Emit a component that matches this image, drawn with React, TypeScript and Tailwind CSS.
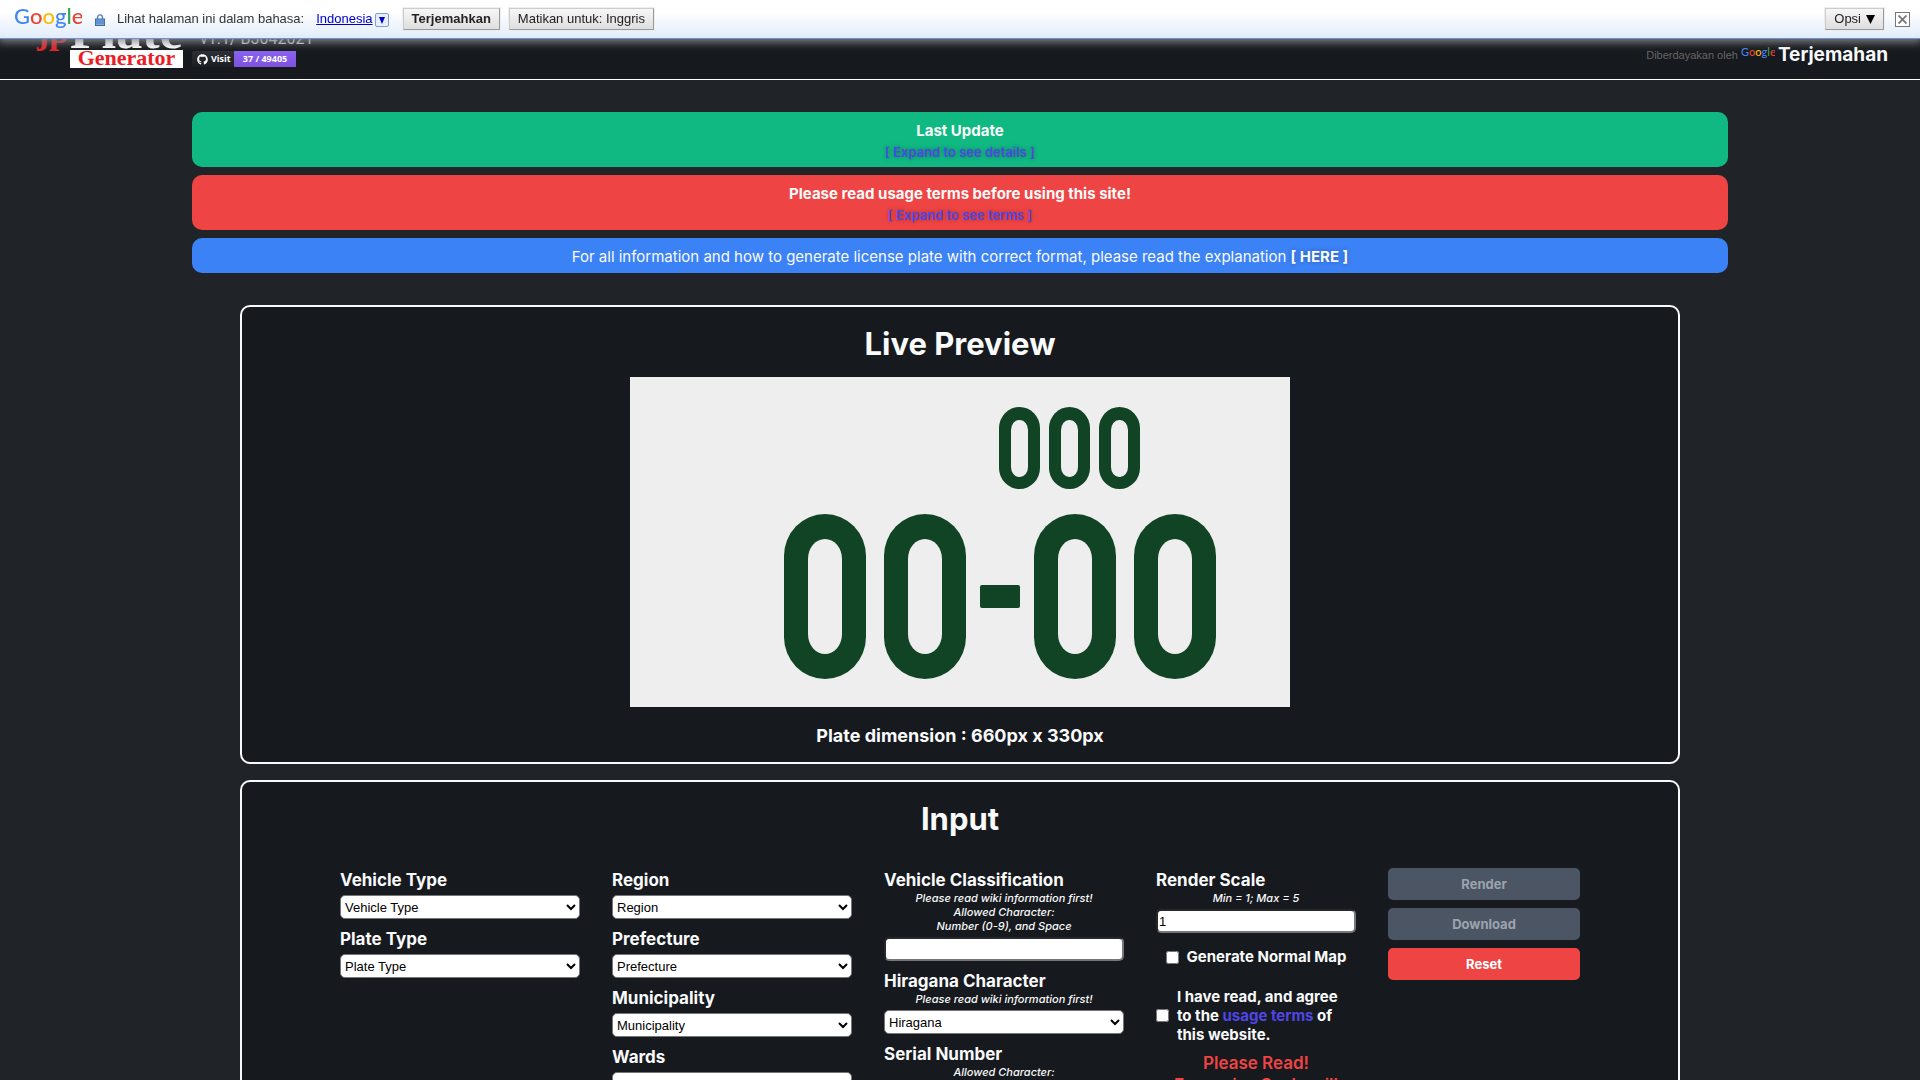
import type { ReactNode } from "react";
import { FaGithub } from "react-icons/fa";

function GoogleWordmark({ className }: { className: string }) {
  return (
    <svg viewBox="0 0 68 24" className={className} role="img" aria-label="Google">
      <text x="0" y="17" fontFamily="Lato, sans-serif" fontSize="22" fontWeight="500" stroke="none">
        <tspan fill="#4285f4">G</tspan>
        <tspan fill="#ea4335">o</tspan>
        <tspan fill="#fbbc05">o</tspan>
        <tspan fill="#4285f4">g</tspan>
        <tspan fill="#34a853">l</tspan>
        <tspan fill="#ea4335">e</tspan>
      </text>
    </svg>
  );
}

const toolbarButton =
  "h-[22px] border border-t-[#ccc] border-l-[#ccc] border-r-[#999] border-b-[#999] bg-linear-to-b from-[#f7f7f7] to-[#dedede] px-2 leading-5 text-[#222] outline outline-[#eee]";

function TranslateToolbar() {
  return (
    <div className="fixed inset-x-0 top-0 z-10 flex h-[39px] items-center border-b border-[#6b90da] bg-linear-to-b from-white from-30% to-[#e1ecfa] pl-[14px] pr-[10px] font-['Liberation_Sans',sans-serif] text-[13px] text-[#333] shadow-[0_1px_9px_2px_#888]">
      <GoogleWordmark className="h-6 w-[68px]" />
      <svg viewBox="0 0 10 12" className="ml-[13px] mt-[1px] h-3 w-[10px]" aria-hidden="true">
        <path d="M2.5 6V3.4a2.5 2.5 0 0 1 5 0V6" fill="none" stroke="#5b83bd" strokeWidth="1.4" />
        <rect x="0.5" y="5" width="9" height="6.5" fill="#7fa8dc" stroke="#3f6eb5" />
        <path d="M1 7h8M1 9h8" stroke="#3f6eb5" strokeWidth="0.8" />
      </svg>
      <span className="ml-3">Lihat halaman ini dalam bahasa:</span>
      <a href="#language" className="ml-3 text-[#0000cc] underline">
        Indonesia
      </a>
      <button
        type="button"
        aria-label="Pilih bahasa"
        className="ml-[2px] mt-[2px] flex size-[14px] items-center justify-center rounded-[2px] border border-[#7b9fd0] bg-[#e6effb]"
      >
        <svg viewBox="0 0 6 7" className="h-[7px] w-[6px]" aria-hidden="true">
          <path d="M0 0h6L3 7z" fill="#0000cc" />
        </svg>
      </button>
      <button type="button" className={`${toolbarButton} ml-[14px] font-bold`}>
        Terjemahkan
      </button>
      <button type="button" className={`${toolbarButton} ml-[9px]`}>
        Matikan untuk: Inggris
      </button>
      <button type="button" className={`${toolbarButton} ml-auto flex items-center gap-[5px]`}>
        Opsi
        <svg viewBox="0 0 9 9" className="size-[9px]" aria-hidden="true">
          <path d="M0 0h9L4.5 9z" fill="#000" />
        </svg>
      </button>
      <button
        type="button"
        aria-label="Tutup"
        className="ml-[11px] flex size-[15px] items-center justify-center border border-[#777] bg-white"
      >
        <svg viewBox="0 0 9 9" className="size-[9px]" aria-hidden="true">
          <path d="M0.5 0.5l8 8M8.5 0.5l-8 8" stroke="#777" strokeWidth="1.8" />
        </svg>
      </button>
    </div>
  );
}

function SiteHeader() {
  return (
    <header className="flex h-20 items-end justify-between border-b border-white bg-[#16191d] pl-9 pr-8">
      <div className="flex items-end gap-2">
        <svg viewBox="0 0 148 60" className="mb-[11px] h-[60px] w-[148px]" role="img" aria-label="jpPlate Generator">
          <g fontFamily="'Liberation Serif', serif" fontWeight="bold">
            <text x="1" y="35" fontSize="36" fill="#e02328">
              jp
            </text>
            <text x="34" y="40" fontSize="52" fill="#fff">
              Plate
            </text>
            <rect x="34" y="42" width="113" height="18" fill="#fff" />
            <text x="90.5" y="57" fontSize="22" fill="#ed1c24" textAnchor="middle">
              Generator
            </text>
          </g>
        </svg>
        <div className="mb-3 flex flex-col gap-1">
          <span className="pl-2 font-[Roboto,sans-serif] text-base leading-4 text-gray-300">v1.1/ B3042021</span>
          <div className="flex h-4 overflow-hidden rounded-[3px] font-['Open_Sans',sans-serif] text-[9px] leading-4 font-bold text-white">
            <span className="flex w-[42px] items-center gap-[3px] bg-linear-to-b from-[#2c2f33] to-[#1c1f22] pl-[5px]">
              <FaGithub className="size-[11px]" aria-hidden="true" />
              Visit
            </span>
            <span className="w-[62px] bg-linear-to-b from-[#8b62f0] to-[#7c52de] text-center">37 / 49405</span>
          </div>
        </div>
      </div>
      <div className="mb-3 flex items-center">
        <span className="mr-[3px] font-['Liberation_Sans',sans-serif] text-[11px] text-[#666]">Diberdayakan oleh</span>
        <GoogleWordmark className="mb-1 mr-[3px] h-3 w-[34px]" />
        <a href="#translate" className="text-[19px] leading-6 font-bold">
          Terjemahan
        </a>
      </div>
    </header>
  );
}

function Notice({ className, children }: { className: string; children: ReactNode }) {
  return (
    <section className={`rounded-[10px] pt-[7px] pb-[5px] text-center text-[15px] leading-[23px] ${className}`}>
      {children}
    </section>
  );
}

function Notices() {
  const expand =
    "mx-auto block text-[13px] leading-5 font-semibold text-[#4f46e5] [text-shadow:0_0_4px_rgba(0,0,0,0.35)]";
  return (
    <div className="mx-auto flex w-4/5 flex-col gap-2">
      <Notice className="bg-[#10b981]">
        <h2 className="font-bold">Last Update</h2>
        <button type="button" className={expand}>
          [ Expand to see details ]
        </button>
      </Notice>
      <Notice className="bg-[#ef4444]">
        <h2 className="font-bold">Please read usage terms before using this site!</h2>
        <button type="button" className={expand}>
          [ Expand to see terms ]
        </button>
      </Notice>
      <Notice className="bg-[#3b82f6]">
        For all information and how to generate license plate with correct format, please read the explanation{" "}
        <a href="#wiki" className="font-bold [text-shadow:0_0_4px_rgba(0,0,0,0.3)]">
          [ HERE ]
        </a>
      </Notice>
    </div>
  );
}

function Card({ title, children }: { title: string; children: ReactNode }) {
  return (
    <section className="mx-auto w-3/4 rounded-[10px] border-2 border-[#f9fafb] bg-[#16191d] pt-4 pb-[14px]">
      <h1 className="text-center text-[31px] leading-[42px] font-bold">{title}</h1>
      {children}
    </section>
  );
}

function PlatePreview() {
  const small = [369, 419, 469];
  const large = [154, 254, 404, 504];
  return (
    <svg viewBox="0 0 660 330" className="mx-auto mt-3 w-full max-w-[660px]" role="img" aria-label="License plate 000 00-00">
      <rect width="660" height="330" fill="#eeeeee" />
      {small.map((x) => (
        <g key={x}>
          <rect x={x} y="30" width="41" height="82" rx="20.5" ry="21" fill="#114425" />
          <rect x={x + 12} y="43" width="17" height="57" rx="8" ry="10" fill="#eeeeee" />
        </g>
      ))}
      {large.map((x) => (
        <g key={x}>
          <rect x={x} y="137" width="82" height="165" rx="41" ry="42" fill="#114425" />
          <rect x={x + 24} y="162" width="34" height="115" rx="17" ry="20" fill="#eeeeee" />
        </g>
      ))}
      <rect x="350" y="208" width="40" height="23" rx="2" fill="#114425" />
    </svg>
  );
}

function Field({ id, label, hints = [], children }: { id: string; label: string; hints?: string[]; children: ReactNode }) {
  return (
    <div className="flex flex-col">
      <label htmlFor={id} className="pt-px text-[17px] leading-[22px] font-bold">
        {label}
      </label>
      {hints.map((hint) => (
        <em key={hint} className="text-center text-[11px] leading-[14px] font-medium">
          {hint}
        </em>
      ))}
      <div className="mt-1 flex">{children}</div>
    </div>
  );
}

function SelectField({ id, label, option, hints }: { id: string; label: string; option: string; hints?: string[] }) {
  return (
    <Field id={id} label={label} hints={hints}>
      <select
        id={id}
        className="h-6 w-full rounded-[5px] border border-[#767676] bg-white font-['Liberation_Sans',sans-serif] text-[13px] text-black"
      >
        <option>{option}</option>
      </select>
    </Field>
  );
}

function TextField({ id, label, value, hints }: { id: string; label: string; value?: string; hints?: string[] }) {
  return (
    <Field id={id} label={label} hints={hints}>
      <input
        id={id}
        type="text"
        defaultValue={value}
        className="h-6 w-full rounded-[5px] border-2 border-t-[#26282b] border-r-[#767676] border-b-[#767676] border-l-[#26282b] bg-white px-[1px] font-['Liberation_Sans',sans-serif] text-[13px] text-black"
      />
    </Field>
  );
}

function InputForm() {
  const wiki = "Please read wiki information first!";
  const action = "h-8 rounded-[5px] pt-px text-[13px] font-bold";
  return (
    <form className="mt-7 flex flex-wrap justify-center gap-8">
      <div className="flex w-60 flex-col gap-2">
        <SelectField id="vehicle-type" label="Vehicle Type" option="Vehicle Type" />
        <SelectField id="plate-type" label="Plate Type" option="Plate Type" />
      </div>
      <div className="flex w-60 flex-col gap-2">
        <SelectField id="region" label="Region" option="Region" />
        <SelectField id="prefecture" label="Prefecture" option="Prefecture" />
        <SelectField id="municipality" label="Municipality" option="Municipality" />
        <SelectField id="wards" label="Wards" option="Wards" />
      </div>
      <div className="flex w-60 flex-col gap-2">
        <TextField
          id="classification"
          label="Vehicle Classification"
          hints={[wiki, "Allowed Character:", "Number (0-9), and Space"]}
        />
        <SelectField id="hiragana" label="Hiragana Character" option="Hiragana" hints={[wiki]} />
        <TextField id="serial" label="Serial Number" hints={["Allowed Character:", "Number (0-9), and Space"]} />
      </div>
      <div className="flex w-[200px] flex-col">
        <TextField id="scale" label="Render Scale" value="1" hints={["Min = 1; Max = 5"]} />
        <div className="mt-3 flex items-center justify-center gap-2">
          <input id="normal-map" type="checkbox" className="size-[13px]" />
          <label htmlFor="normal-map" className="text-[15px] leading-6 font-bold">
            Generate Normal Map
          </label>
        </div>
        <div className="mt-[18px] flex items-center gap-2 pr-2">
          <input id="agree" type="checkbox" className="size-[13px] shrink-0" />
          <label htmlFor="agree" className="text-[15px] leading-[19px] font-bold">
            I have read, and agree to the{" "}
            <a href="#terms" className="text-[#4f46e5]">
              usage terms
            </a>{" "}
            of this website.
          </label>
        </div>
        <p className="mt-2 text-center text-[17px] leading-[22px] font-semibold whitespace-nowrap text-[#ef4444]">
          Please Read!
          <br />
          Excessive Scale will
        </p>
      </div>
      <div className="flex w-48 flex-col gap-2">
        <button type="button" disabled className={`${action} bg-[#4b5563] text-[#9ca3af]`}>
          Render
        </button>
        <button type="button" disabled className={`${action} bg-[#4b5563] text-[#9ca3af]`}>
          Download
        </button>
        <button type="reset" className={`${action} bg-[#ef4444] text-white`}>
          Reset
        </button>
      </div>
    </form>
  );
}

export default function App() {
  return (
    <div className="h-screen overflow-y-auto bg-[#202327] font-[Inter,sans-serif] text-[#f9fafb] [scrollbar-width:none]">
      <TranslateToolbar />
      <SiteHeader />
      <main className="flex flex-col py-8">
        <Notices />
        <div className="mt-8 flex flex-col gap-4">
          <Card title="Live Preview">
            <PlatePreview />
            <p className="mt-[17px] text-center text-[18px] leading-6 font-bold">Plate dimension : 660px x 330px</p>
          </Card>
          <Card title="Input">
            <InputForm />
          </Card>
        </div>
      </main>
    </div>
  );
}
